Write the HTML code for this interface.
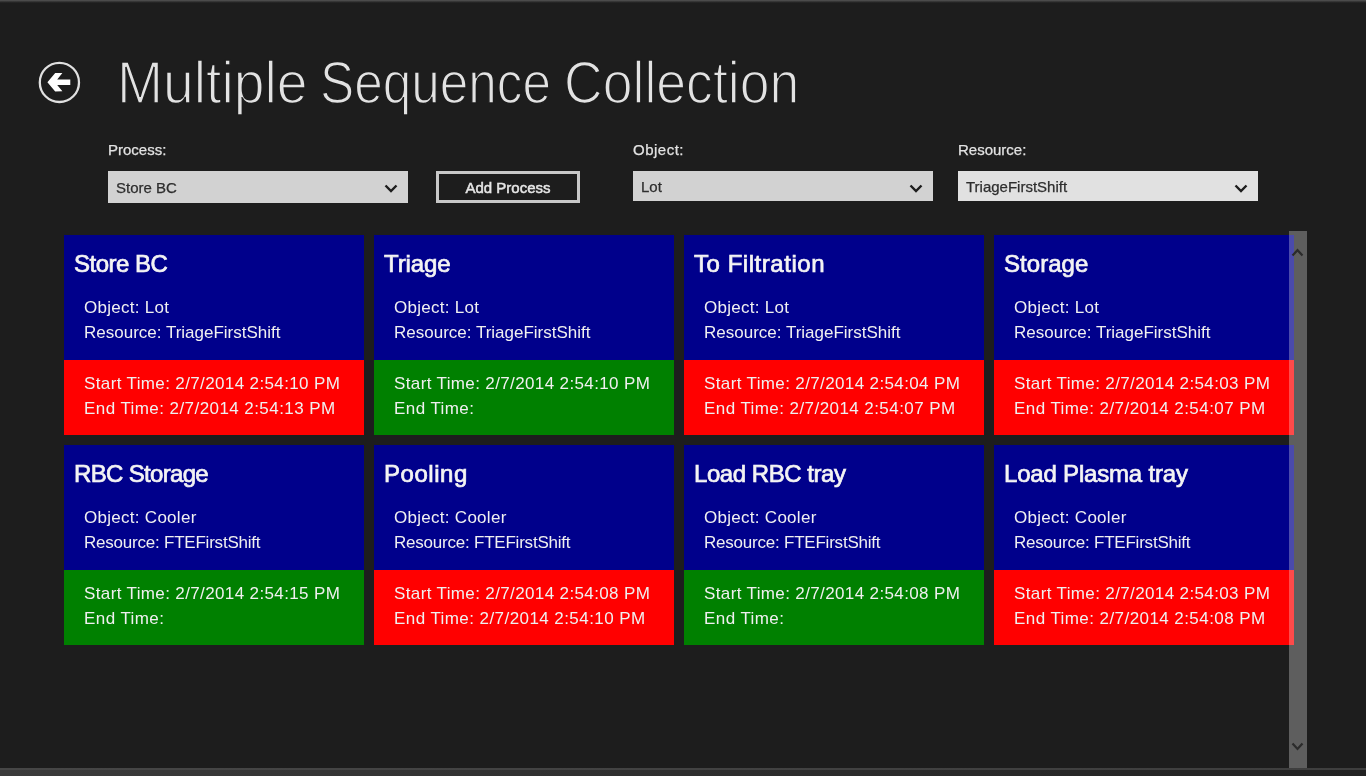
<!DOCTYPE html>
<html><head><meta charset="utf-8"><title>Multiple Sequence Collection</title>
<style>
html,body{margin:0;padding:0}
body{width:1366px;height:776px;overflow:hidden;position:relative;background:#1d1d1d;font-family:"Liberation Sans",sans-serif;color:#fff}
.abs{position:absolute}
.topbar{position:absolute;left:0;top:0;width:1366px;height:3px;background:linear-gradient(#4b4b4b 0,#4b4b4b 1px,#323232 1.6px,#1d1d1d 3px)}
.botbar{position:absolute;left:0;top:768px;width:1366px;height:8px;background:linear-gradient(to right,#3b3b3b,#2e2e2e 50%,#222)}
.botbar:before{content:"";position:absolute;left:0;top:0;width:100%;height:2px;background:linear-gradient(to right,#464646,#3e3e3e)}
.title{position:absolute;left:117px;top:53px;font-size:60px;line-height:60px;white-space:nowrap;color:#e2e2e2;letter-spacing:0;transform:scaleX(0.88);transform-origin:0 0;-webkit-text-stroke:1.6px #1d1d1d}
.lbl{position:absolute;font-size:15px;line-height:15px;color:#e2e2e2;-webkit-text-stroke:0.25px #e2e2e2;white-space:nowrap}
.combo{position:absolute;top:171px;height:30px;width:300px;background:#d2d2d2}
.combo .v{position:absolute;left:8px;top:8px;font-size:15px;line-height:15px;color:#2e2e2e;-webkit-text-stroke:0.25px #2e2e2e;white-space:nowrap}
.combo svg{position:absolute;right:10px;top:13px}
.btn{position:absolute;left:436px;top:171px;width:138px;height:26px;border:3px solid #c8c8c8;}
.btn span{position:absolute;left:0;right:0;top:6px;text-align:center;font-size:15px;line-height:15px;font-weight:normal;-webkit-text-stroke:0.5px #e6e6e6;color:#e6e6e6;letter-spacing:0}
.card{position:absolute;width:300px;height:200px}
.hd{position:absolute;left:0;top:0;width:300px;height:125px;background:#00008b}
.ft{position:absolute;left:0;top:125px;width:300px;height:75px}
.r{background:#ff0000} .g{background:#008000}
.ttl{position:absolute;left:10px;top:17px;font-size:24px;line-height:24px;font-weight:normal;-webkit-text-stroke:0.7px #f4f4f4;white-space:nowrap;color:#f4f4f4}
.ln{position:absolute;left:20px;font-size:17px;line-height:17px;white-space:nowrap;color:#f0f0f0}
.l1{top:64px;letter-spacing:0.28px} .l2{top:89px} .l3{top:15px;letter-spacing:0.37px} .l4{top:40px;letter-spacing:0.43px}
.sb{position:absolute;left:1289px;top:231px;width:18px;height:537px;background:rgba(255,255,255,0.29)}
</style></head><body>
<div id="root" style="position:absolute;left:0;top:0;width:1366px;height:776px;filter:blur(0.5px)">
<div class="topbar"></div>
<svg class="abs" style="left:30px;top:55px" width="60" height="55" viewBox="30 55 60 55">
  <circle cx="59.4" cy="82.4" r="19.6" fill="none" stroke="#e0e0e0" stroke-width="2.3"/>
  <path d="M47.4 82.2 L55.2 72.9 L62.4 73 L57.2 79.6 L70.3 79.6 L70.3 84.9 L57.2 84.9 L62.4 91.3 L55.2 91.5 Z" fill="#fff"/>
</svg>
<div class="title" style="left:116.5px;transform:scaleX(0.921)">Multiple</div>
<div class="title" style="left:320.2px;transform:scaleX(0.855)">Sequence</div>
<div class="title" style="left:563.5px;transform:scaleX(0.893)">Collection</div>
<div class="lbl" style="left:108px;top:142px">Process:</div>
<div class="lbl" style="left:633px;top:142px;letter-spacing:0.5px">Object:</div>
<div class="lbl" style="left:958px;top:142px">Resource:</div>
<div class="combo" style="left:108px;height:32px"><span class="v" style="top:9px">Store BC</span><svg width="14" height="9" viewBox="0 0 14 9" style="top:13px"><path d="M1.5 1.5 L7 7 L12.5 1.5" stroke="#1d1d1d" stroke-width="2.4" fill="none"/></svg></div>
<div class="btn"><span>Add Process</span></div>
<div class="combo" style="left:633px"><span class="v">Lot</span><svg width="14" height="9" viewBox="0 0 14 9"><path d="M1.5 1.5 L7 7 L12.5 1.5" stroke="#1d1d1d" stroke-width="2.4" fill="none"/></svg></div>
<div class="combo" style="left:958px;background:#e1e1e1"><span class="v">TriageFirstShift</span><svg width="14" height="9" viewBox="0 0 14 9"><path d="M1.5 1.5 L7 7 L12.5 1.5" stroke="#1d1d1d" stroke-width="2.4" fill="none"/></svg></div>
<div class="card" style="left:64px;top:235px">
  <div class="hd"><div class="ttl" style="letter-spacing:-0.51px">Store BC</div><div class="ln l1">Object: Lot</div><div class="ln l2">Resource: TriageFirstShift</div></div>
  <div class="ft r"><div class="ln l3">Start Time: 2/7/2014 2:54:10 PM</div><div class="ln l4">End Time: 2/7/2014 2:54:13 PM</div></div>
</div>
<div class="card" style="left:374px;top:235px">
  <div class="hd"><div class="ttl" style="letter-spacing:-0.1px">Triage</div><div class="ln l1">Object: Lot</div><div class="ln l2">Resource: TriageFirstShift</div></div>
  <div class="ft g"><div class="ln l3">Start Time: 2/7/2014 2:54:10 PM</div><div class="ln l4">End Time: </div></div>
</div>
<div class="card" style="left:684px;top:235px">
  <div class="hd"><div class="ttl" style="letter-spacing:0.54px">To Filtration</div><div class="ln l1">Object: Lot</div><div class="ln l2">Resource: TriageFirstShift</div></div>
  <div class="ft r"><div class="ln l3">Start Time: 2/7/2014 2:54:04 PM</div><div class="ln l4">End Time: 2/7/2014 2:54:07 PM</div></div>
</div>
<div class="card" style="left:994px;top:235px">
  <div class="hd"><div class="ttl" style="letter-spacing:0.05px">Storage</div><div class="ln l1">Object: Lot</div><div class="ln l2">Resource: TriageFirstShift</div></div>
  <div class="ft r"><div class="ln l3">Start Time: 2/7/2014 2:54:03 PM</div><div class="ln l4">End Time: 2/7/2014 2:54:07 PM</div></div>
</div>
<div class="card" style="left:64px;top:445px">
  <div class="hd"><div class="ttl" style="letter-spacing:-0.67px">RBC Storage</div><div class="ln l1">Object: Cooler</div><div class="ln l2" style="letter-spacing:-0.22px">Resource: FTEFirstShift</div></div>
  <div class="ft g"><div class="ln l3">Start Time: 2/7/2014 2:54:15 PM</div><div class="ln l4">End Time: </div></div>
</div>
<div class="card" style="left:374px;top:445px">
  <div class="hd"><div class="ttl" style="letter-spacing:0.53px">Pooling</div><div class="ln l1">Object: Cooler</div><div class="ln l2" style="letter-spacing:-0.22px">Resource: FTEFirstShift</div></div>
  <div class="ft r"><div class="ln l3">Start Time: 2/7/2014 2:54:08 PM</div><div class="ln l4">End Time: 2/7/2014 2:54:10 PM</div></div>
</div>
<div class="card" style="left:684px;top:445px">
  <div class="hd"><div class="ttl" style="letter-spacing:-0.45px">Load RBC tray</div><div class="ln l1">Object: Cooler</div><div class="ln l2" style="letter-spacing:-0.22px">Resource: FTEFirstShift</div></div>
  <div class="ft g"><div class="ln l3">Start Time: 2/7/2014 2:54:08 PM</div><div class="ln l4">End Time: </div></div>
</div>
<div class="card" style="left:994px;top:445px">
  <div class="hd"><div class="ttl" style="letter-spacing:-0.19px">Load Plasma tray</div><div class="ln l1">Object: Cooler</div><div class="ln l2" style="letter-spacing:-0.22px">Resource: FTEFirstShift</div></div>
  <div class="ft r"><div class="ln l3">Start Time: 2/7/2014 2:54:03 PM</div><div class="ln l4">End Time: 2/7/2014 2:54:08 PM</div></div>
</div>
<div class="sb"></div>
<svg class="abs" style="left:1284px;top:240px" width="28" height="520" viewBox="1284 240 28 520">
  <path d="M1292.5 255.6 L1297.5 250.2 L1302.5 255.6" stroke="#2b2b2b" stroke-width="2.2" fill="none"/>
  <path d="M1292.5 743.6 L1297.5 749 L1302.5 743.6" stroke="#2b2b2b" stroke-width="2.2" fill="none"/>
</svg>
<div class="botbar"></div>
</div>
</body></html>
